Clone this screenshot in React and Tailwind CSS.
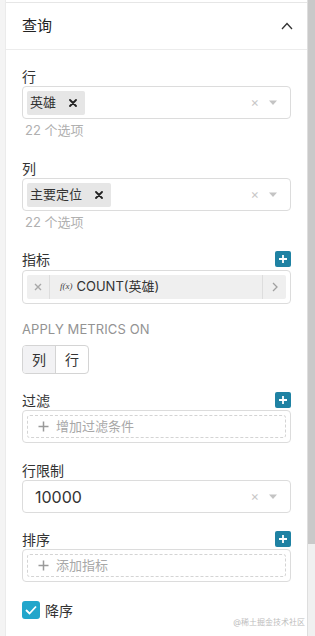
const font = { fontFamily: "Inter, 'Noto Sans CJK SC', sans-serif" };

function Caret() {
  return (
    <svg width="10" height="6" viewBox="0 0 10 6" className="ml-[9px]">
      <path d="M1 0.5h8L5 5z" fill="#c4c4c4" />
    </svg>
  );
}

function ClearX() {
  return <span className="text-[13px] text-[#c8c8c8] leading-none">×</span>;
}

function Tag({ label }) {
  return (
    <div className="h-[24px] ml-[4px] pl-[3px] pr-[8px] flex items-center bg-[#e6e6e6] rounded-[2px] text-[13px] text-[#333]">
      <span>{label}</span>
      <svg width="8" height="8" viewBox="0 0 8 8" className="ml-[13px]">
        <path d="M1 1l6 6M7 1L1 7" stroke="#222" strokeWidth="1.8" strokeLinecap="round" />
      </svg>
    </div>
  );
}

function SelectBox({ children }) {
  return (
    <div className="h-[33px] border border-[#dcdcdc] rounded-[4px] flex items-center pr-[12px]">
      <div className="flex-1 flex items-center">{children}</div>
      <ClearX />
      <Caret />
    </div>
  );
}

function Label({ text, plus }) {
  return (
    <div className="h-5 flex items-center justify-between text-[14px] text-[#333]">
      <span>{text}</span>
      {plus && (
        <div className="w-[16px] h-[16px] rounded-[2px] bg-[#1f82a3] flex items-center justify-center">
          <svg width="10" height="10" viewBox="0 0 10 10">
            <path d="M5 1v8M1 5h8" stroke="#fff" strokeWidth="1.8" />
          </svg>
        </div>
      )}
    </div>
  );
}

function AddBox({ text }) {
  return (
    <div className="h-[33px] border border-[#dcdcdc] rounded-[4px] px-[4px] flex items-center">
      <div className="flex-1 h-[23px] border border-dashed border-[#d4d4d4] rounded-[3px] flex items-center pl-[10px] text-[13px] text-[#a8a8a8]">
        <svg width="11" height="11" viewBox="0 0 11 11" className="mr-[7px]">
          <path d="M5.5 0.5v10M0.5 5.5h10" stroke="#9a9a9a" strokeWidth="1.5" />
        </svg>
        {text}
      </div>
    </div>
  );
}

export default function App() {
  return (
    <div className="w-[315px] h-[636px] flex bg-[#f4f4f4] overflow-hidden relative" style={font}>
      <div className="w-[6px] border-r border-[#ebebeb]" />
      <div className="w-[302px] bg-white border-r border-[#dedede] flex flex-col">
        <div className="h-[3px] border-b border-[#e6e6e6] bg-white" />
        <div className="h-[47px] border-b border-[#ececec] flex items-center justify-between pl-[16px] pr-[14px]">
          <span className="text-[15px] text-[#222] mt-[1px]">查询</span>
          <svg width="12" height="8" viewBox="0 0 12 8">
            <path d="M1 7l5-5.5L11 7" stroke="#333" strokeWidth="1.3" fill="none" />
          </svg>
        </div>
        <div className="px-4 pt-[16px] flex flex-col">
          <Label text="行" />
          <SelectBox>
            <Tag label="英雄" />
          </SelectBox>
          <div className="h-5 mt-[2px] pl-[3px] text-[13px] text-[#b0b0b0] flex items-center">22 个选项</div>

          <div className="mt-[17px]">
            <Label text="列" />
          </div>
          <SelectBox>
            <Tag label="主要定位" />
          </SelectBox>
          <div className="h-5 mt-[2px] pl-[3px] text-[13px] text-[#b0b0b0] flex items-center">22 个选项</div>

          <div className="mt-[16px]">
            <Label text="指标" plus />
          </div>
          <div className="h-[34px] mt-[1px] border border-[#dcdcdc] rounded-[4px] px-[4px] flex items-center">
            <div className="flex-1 h-[24px] bg-[#efefef] rounded-[2px] flex items-center text-[13px] text-[#333]">
              <div className="w-[23px] h-full flex items-center justify-center border-r border-[#dddddd]">
                <svg width="8" height="8" viewBox="0 0 8 8">
                  <path d="M1 1l6 6M7 1L1 7" stroke="#a8a8a8" strokeWidth="1.4" />
                </svg>
              </div>
              <span className="ml-[10px] text-[9px] italic text-[#444]" style={{ fontFamily: "'Liberation Serif', serif" }}>f(x)</span>
              <span className="ml-[4px] flex-1">COUNT(英雄)</span>
              <div className="w-[24px] h-full flex items-center justify-center border-l border-[#dddddd]">
                <svg width="6" height="10" viewBox="0 0 6 10">
                  <path d="M1 1l4 4-4 4" stroke="#a0a0a0" strokeWidth="1.3" fill="none" />
                </svg>
              </div>
            </div>
          </div>

          <div className="h-5 mt-[16px] flex items-center text-[13px] text-[#939393] tracking-[0.1px]">APPLY METRICS ON</div>
          <div className="mt-[5px] w-[67px] h-[29px] border border-[#d4d4d4] rounded-[4px] flex text-[14px] text-[#333] overflow-hidden">
            <div className="w-[33px] bg-[#f2f2f4] border-r border-[#d4d4d4] flex items-center justify-center">列</div>
            <div className="flex-1 flex items-center justify-center">行</div>
          </div>

          <div className="mt-[16px]">
            <Label text="过滤" plus />
          </div>
          <AddBox text="增加过滤条件" />

          <div className="mt-[17px]">
            <Label text="行限制" />
          </div>
          <div className="h-[33px] border border-[#dcdcdc] rounded-[4px] flex items-center pl-[12px] pr-[12px]">
            <span className="flex-1 text-[16px] text-[#333]">10000</span>
            <ClearX />
            <Caret />
          </div>

          <div className="mt-[16px]">
            <Label text="排序" plus />
          </div>
          <AddBox text="添加指标" />

          <div className="mt-[18px] h-5 flex items-center">
            <div className="w-[18px] h-[18px] rounded-[3px] bg-[#22a6cb] flex items-center justify-center">
              <svg width="12" height="10" viewBox="0 0 12 10">
                <path d="M1 5l3.5 3.5L11 1.5" stroke="#fff" strokeWidth="1.8" fill="none" />
              </svg>
            </div>
            <span className="ml-[5px] text-[14px] text-[#333]">降序</span>
          </div>
        </div>
      </div>
      <div className="w-[7px] flex flex-col bg-[#f0f0f0]">
        <div className="h-[544px] bg-[#c9c9c9]" />
      </div>
      <div className="absolute right-[10px] top-[618px] text-[8px] text-[#bdbdbd] leading-none">@稀土掘金技术社区</div>
    </div>
  );
}
